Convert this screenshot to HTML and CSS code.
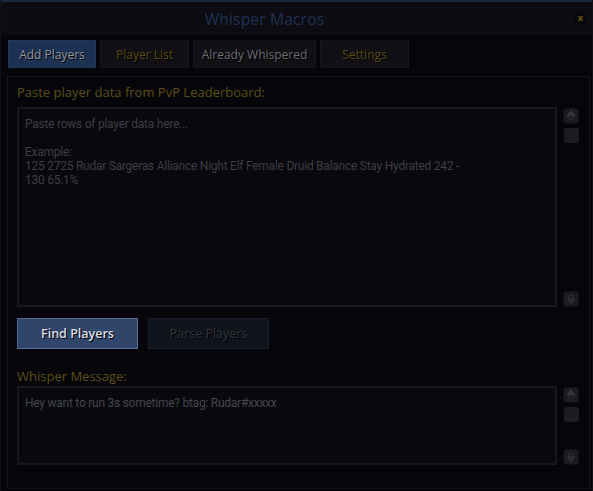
FILE: index.html
```html
<!DOCTYPE html>
<html>
<head>
    <title>Whisper Macros</title>
    <link rel="stylesheet" href="styles.css">
</head>
<body>
    <div class="window">
        <div class="titlebar">
            <div class="title">Whisper Macros</div>
            <button class="close">x</button>
        </div>

        <div class="tabs">
            <button class="tab active">Add Players</button>
            <button class="tab gold" style="width: 89px">Player List</button>
            <button class="tab" style="width: 123px">Already Whispered</button>
            <button class="tab gold" style="width: 89px">Settings</button>
        </div>

        <div class="panel">
            <div class="label">Paste player data from PvP Leaderboard:</div>
            <div class="field">
                <textarea class="input big" placeholder="Paste rows of player data here...&#10;&#10;Example:&#10;125 2725 Rudar Sargeras Alliance Night Elf Female Druid Balance Stay Hydrated 242 -&#10;130 65.1%"></textarea>
                <div class="scroll">
                    <svg class="arrow" width="16" height="16" viewBox="0 0 16 16">
                        <rect x="0.5" y="0.5" width="15" height="15" rx="3" fill="#1a1a20"/>
                        <path d="M8 2 L13 8.5 L3 8.5 Z" fill="#35353d"/>
                        <circle cx="8" cy="9.5" r="2.5" fill="none" stroke="#2c2c34"/>
                    </svg>
                    <div class="thumb"></div>
                    <div class="spacer"></div>
                    <svg class="arrow" width="16" height="16" viewBox="0 0 16 16">
                        <rect x="0.5" y="0.5" width="15" height="15" rx="3" fill="#1a1a20"/>
                        <path d="M8 14 L13 7.5 L3 7.5 Z" fill="#2a2a32"/>
                        <circle cx="8" cy="6.5" r="2.5" fill="none" stroke="#32323a"/>
                    </svg>
                </div>
            </div>

            <div class="actions">
                <button class="btn primary">Find Players</button>
                <button class="btn disabled">Parse Players</button>
            </div>

            <div class="label tight">Whisper Message:</div>
            <div class="field">
                <textarea class="input small">Hey want to run 3s sometime? btag: Rudar#xxxxx</textarea>
                <div class="scroll">
                    <svg class="arrow" width="16" height="16" viewBox="0 0 16 16">
                        <rect x="0.5" y="0.5" width="15" height="15" rx="3" fill="#1a1a20"/>
                        <path d="M8 2 L13 8.5 L3 8.5 Z" fill="#35353d"/>
                        <circle cx="8" cy="9.5" r="2.5" fill="none" stroke="#2c2c34"/>
                    </svg>
                    <div class="thumb"></div>
                    <div class="spacer"></div>
                    <svg class="arrow" width="16" height="16" viewBox="0 0 16 16">
                        <rect x="0.5" y="0.5" width="15" height="15" rx="3" fill="#1a1a20"/>
                        <path d="M8 14 L13 7.5 L3 7.5 Z" fill="#2a2a32"/>
                        <circle cx="8" cy="6.5" r="2.5" fill="none" stroke="#32323a"/>
                    </svg>
                </div>
            </div>
        </div>
    </div>
</body>
</html>
```

FILE: styles.css
```css
body {
    margin: 0;
    background: #06060a;
    font-family: "Open Sans", sans-serif;
}

.window {
    width: 593px;
    height: 491px;
    box-sizing: border-box;
    border-left: 1px solid #101017;
    border-right: 1px solid #101017;
    overflow: hidden;
}

.titlebar {
    height: 33px;
    border-top: 2px solid #1b2740;
    background: #0c0c12;
    position: relative;
    display: flex;
    align-items: center;
    justify-content: center;
    padding-right: 64px;
}

.title {
    color: #1f3152;
    font-size: 15.5px;
    letter-spacing: 0.2px;
}

.close {
    position: absolute;
    right: 5px;
    top: 10px;
    width: 13px;
    height: 13px;
    border-radius: 50%;
    border: none;
    background: #07070b;
    color: #67550f;
    font-family: "DejaVu Sans", sans-serif;
    font-weight: bold;
    font-size: 9px;
    line-height: 13px;
    padding: 0;
}

.tabs {
    display: flex;
    gap: 4px;
    padding: 5px 7px 0 7px;
}

.tab {
    width: 89px;
    height: 28px;
    font-family: "Open Sans", sans-serif;
    font-size: 12px;
    color: #6c6c71;
    background: #101015;
    border: 1px dotted #1a1a21;
    text-shadow: 1px 1px 0 #000;
    padding: 0;
}

.tab.active {
    width: 88px;
    background: #1d3152;
    border-color: #283e61;
    color: #96969b;
}

.tab.gold {
    color: #5c4c10;
}

.panel {
    margin: 8px 2px 0 6px;
    height: 413px;
    box-sizing: border-box;
    border: 1px solid #15151d;
    padding: 7px 9px 0 9px;
}

.label {
    color: #5d4e13;
    font-size: 13px;
    height: 17px;
    line-height: 17px;
    margin-bottom: 6px;
}

.label.tight {
    margin-bottom: 1px;
}

.field {
    display: flex;
    gap: 6px;
}

.input {
    width: 540px;
    box-sizing: border-box;
    background: #08080d;
    border: 2px solid #17171e;
    color: #46464c;
    font-family: Roboto, "Liberation Sans", sans-serif;
    font-size: 12px;
    letter-spacing: -0.25px;
    line-height: 14px;
    padding: 8px 6px;
    resize: none;
    outline: none;
    margin: 0;
    overflow: hidden;
}

.input::placeholder {
    color: #3e3e44;
}

.big {
    height: 200px;
}

.small {
    height: 79px;
}

.scroll {
    display: flex;
    flex-direction: column;
    padding-top: 1px;
}

.arrow {
    display: block;
}

.thumb {
    width: 15px;
    height: 15px;
    margin-top: 4px;
    margin-left: 1px;
    border-radius: 3px;
    background: #1c1c22;
}

.spacer {
    flex: 1;
}

.actions {
    display: flex;
    gap: 10px;
    margin: 11px 0 19px 0;
}

.btn {
    width: 121px;
    height: 31px;
    font-family: "Open Sans", sans-serif;
    font-size: 12.5px;
    text-shadow: 1px 1px 0 #000;
    padding: 0;
}

.primary {
    background: #30456a;
    border: 1px solid #566c96;
    color: #dedee2;
    font-weight: 600;
}

.disabled {
    background: #10141c;
    border: 1px dotted #1d2840;
    color: #35353c;
}
```
